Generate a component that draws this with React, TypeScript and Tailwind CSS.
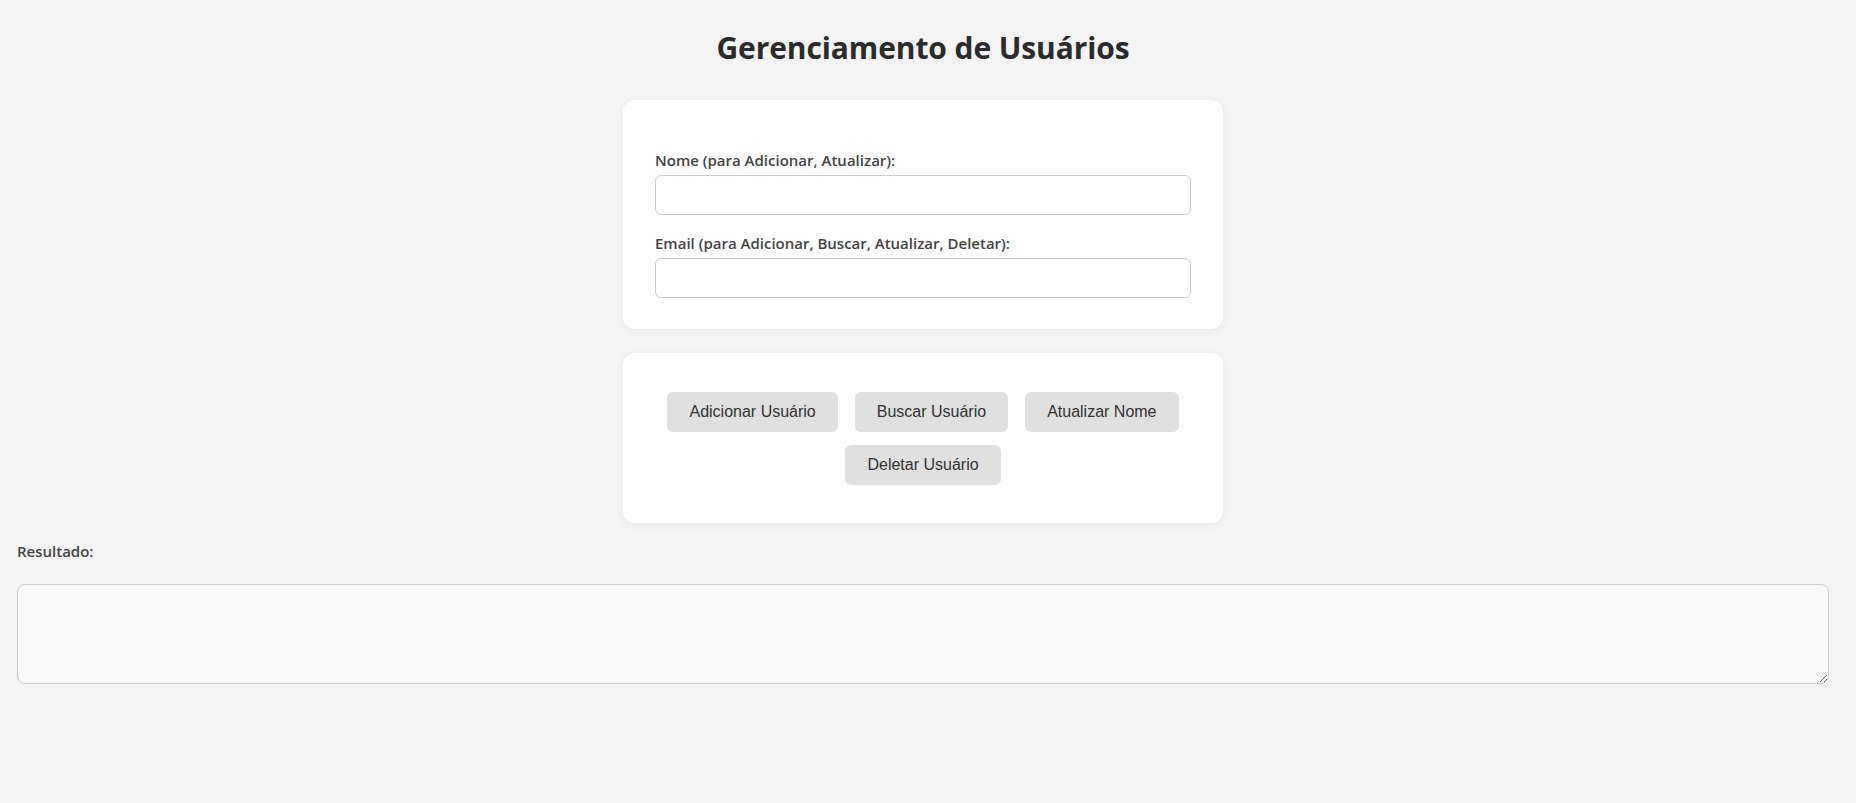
import { useState } from "react";

const actions = ["Adicionar Usuário", "Buscar Usuário", "Atualizar Nome", "Deletar Usuário"];

export default function App() {
    const [nome, setNome] = useState("");
    const [email, setEmail] = useState("");
    const [resultado, setResultado] = useState("");

    return (
        <div className="min-h-screen bg-[#f4f4f4] pl-[17px] pr-[27px] font-['Open_Sans',sans-serif] text-[#333]">
            {/* Title */}
            <h1 className="pt-[30px] text-center text-[30px] leading-[36px] font-bold tracking-[-0.1px] text-[#2b2b2b]">
                Gerenciamento de Usuários
            </h1>

            {/* Form card */}
            <div className="mx-auto mt-[34px] w-[600px] rounded-xl bg-white px-8 pt-[50px] pb-[31px] shadow-[0_2px_10px_rgba(0,0,0,0.05)]">
                <label className="mb-[5px] block text-[15px] leading-[20px] font-semibold text-[#444]">
                    Nome (para Adicionar, Atualizar):
                </label>
                <input
                    value={nome}
                    onChange={(e) => setNome(e.target.value)}
                    className="block h-[40px] w-full rounded-md border border-[#ccc] bg-white px-3 outline-none"
                />
                <label className="mt-[18px] mb-[5px] block text-[15px] leading-[20px] font-semibold text-[#444]">
                    Email (para Adicionar, Buscar, Atualizar, Deletar):
                </label>
                <input
                    value={email}
                    onChange={(e) => setEmail(e.target.value)}
                    className="block h-[40px] w-full rounded-md border border-[#ccc] bg-white px-3 outline-none"
                />
            </div>

            {/* Actions card */}
            <div className="mx-auto mt-[24px] flex w-[600px] flex-wrap justify-center gap-x-[17px] gap-y-[13px] rounded-xl bg-white px-8 pt-[39px] pb-[38px] shadow-[0_2px_10px_rgba(0,0,0,0.05)]">
                {actions.map((a) => (
                    <button
                        key={a}
                        onClick={() => setResultado(a)}
                        className="rounded-md bg-[#e0e0e0] px-[22px] py-[11px] font-['Liberation_Sans',Arial,sans-serif] text-[16px] leading-[18px] text-[#333]"
                    >
                        {a}
                    </button>
                ))}
            </div>

            {/* Result */}
            <label className="mt-[18px] mb-[23px] block text-[15px] leading-[20px] font-semibold text-[#444]">
                Resultado:
            </label>
            <textarea
                value={resultado}
                onChange={(e) => setResultado(e.target.value)}
                className="block h-[100px] w-full rounded-lg border border-[#ccc] bg-[#fafafa] p-2 outline-none"
            />
        </div>
    );
}
